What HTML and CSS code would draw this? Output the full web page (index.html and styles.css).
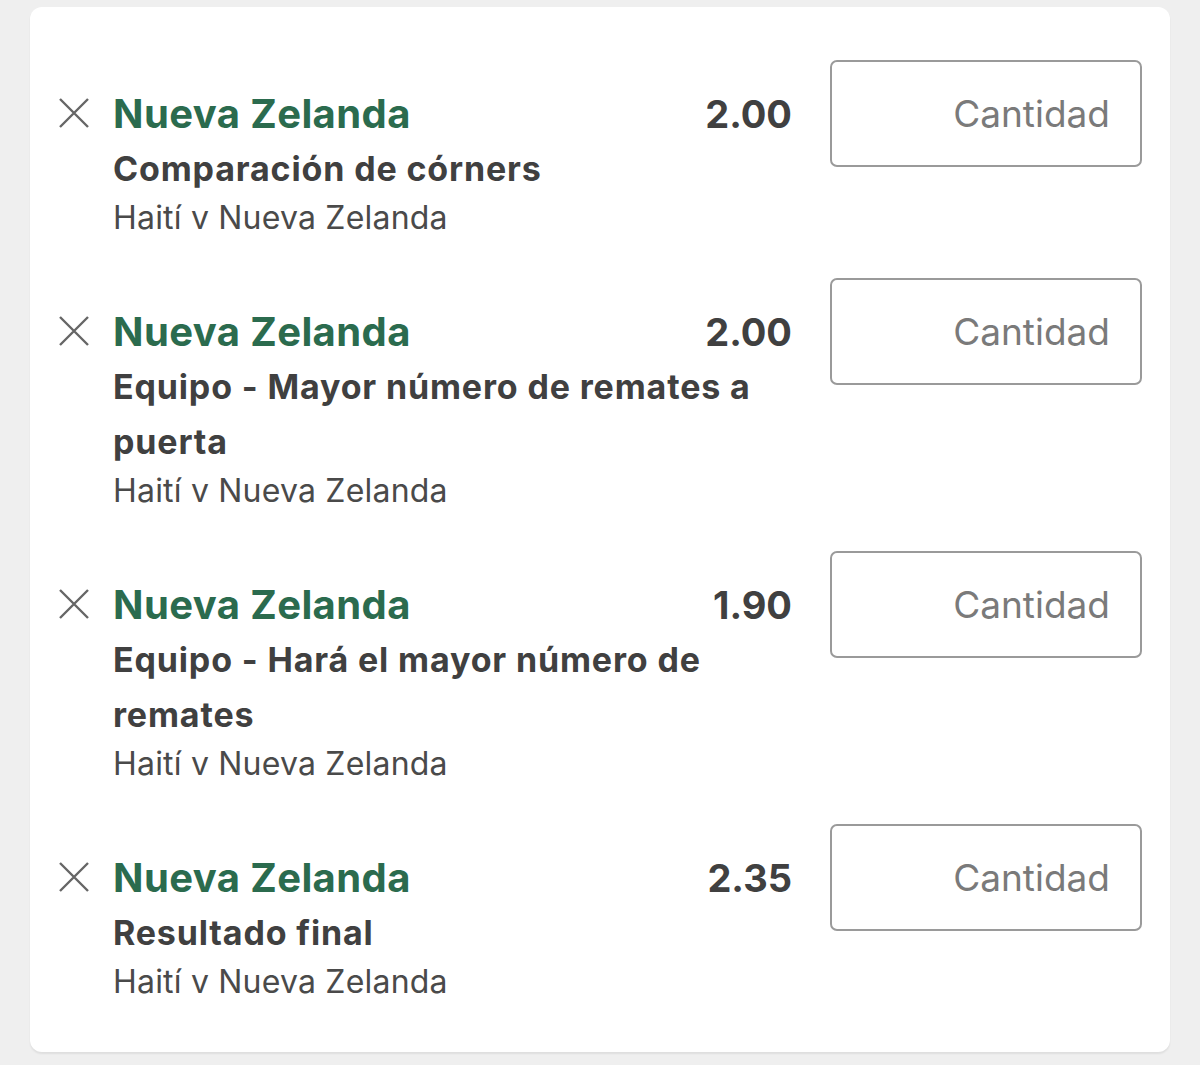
FILE: index.html
```html
<!DOCTYPE html>
<html lang="es">
<head>
<meta charset="utf-8">
<title>Boleto</title>
<link rel="stylesheet" href="styles.css">
</head>
<body>
<div class="card">
  <div class="bet">
    <button class="remove" aria-label="Quitar"><svg viewBox="0 0 32 32" width="32" height="32"><path d="M2 2 L30 30 M30 2 L2 30" stroke="#666" stroke-width="2.4" fill="none"/></svg></button>
    <div class="info">
      <div class="head"><span class="sel">Nueva Zelanda</span><span class="odds">2.00</span></div>
      <div class="market">Comparación de córners</div>
      <div class="event">Haití v Nueva Zelanda</div>
    </div>
    <input class="stake" type="text" placeholder="Cantidad">
  </div>
  <div class="bet">
    <button class="remove" aria-label="Quitar"><svg viewBox="0 0 32 32" width="32" height="32"><path d="M2 2 L30 30 M30 2 L2 30" stroke="#666" stroke-width="2.4" fill="none"/></svg></button>
    <div class="info">
      <div class="head"><span class="sel">Nueva Zelanda</span><span class="odds">2.00</span></div>
      <div class="market">Equipo - Mayor número de remates a puerta</div>
      <div class="event">Haití v Nueva Zelanda</div>
    </div>
    <input class="stake" type="text" placeholder="Cantidad">
  </div>
  <div class="bet">
    <button class="remove" aria-label="Quitar"><svg viewBox="0 0 32 32" width="32" height="32"><path d="M2 2 L30 30 M30 2 L2 30" stroke="#666" stroke-width="2.4" fill="none"/></svg></button>
    <div class="info">
      <div class="head"><span class="sel">Nueva Zelanda</span><span class="odds">1.90</span></div>
      <div class="market">Equipo - Hará el mayor número de remates</div>
      <div class="event">Haití v Nueva Zelanda</div>
    </div>
    <input class="stake" type="text" placeholder="Cantidad">
  </div>
  <div class="bet">
    <button class="remove" aria-label="Quitar"><svg viewBox="0 0 32 32" width="32" height="32"><path d="M2 2 L30 30 M30 2 L2 30" stroke="#666" stroke-width="2.4" fill="none"/></svg></button>
    <div class="info">
      <div class="head"><span class="sel">Nueva Zelanda</span><span class="odds">2.35</span></div>
      <div class="market">Resultado final</div>
      <div class="event">Haití v Nueva Zelanda</div>
    </div>
    <input class="stake" type="text" placeholder="Cantidad">
  </div>
</div>
</body>
</html>
```

FILE: styles.css
```css
* { box-sizing: border-box; }
html, body { margin: 0; padding: 0; }
body {
  background: #efefef;
  font-family: Inter, Roboto, "Liberation Sans", sans-serif;
  height: 1065px;
  padding-top: 7px;
}
.card {
  margin: 0 30px;
  width: 1140px;
  height: 1045px;
  background: #fff;
  border-radius: 12px;
  box-shadow: 0 2px 2px rgba(0,0,0,0.07);
  padding: 53px 28px 0 28px;
}
.bet {
  display: flex;
  align-items: flex-start;
  margin-bottom: 38px;
}
.remove {
  width: 55px;
  flex: 0 0 55px;
  padding: 0;
  margin: 37px 0 0 0;
  border: 0;
  background: none;
  display: flex;
  justify-content: flex-start;
}
.remove svg { display: block; }
.info {
  flex: 1 1 auto;
  padding-top: 27px;
  min-width: 0;
}
.head {
  display: flex;
  justify-content: space-between;
  align-items: baseline;
  line-height: 54px;
}
.sel {
  font-size: 40px;
  font-weight: 700;
  letter-spacing: 0.4px;
  color: #2b6b4e;
}
.odds {
  font-size: 38px;
  font-weight: 700;
  color: #404040;
  margin-right: -1px;
}
.market {
  font-size: 34px;
  font-weight: 700;
  letter-spacing: 0.85px;
  color: #404040;
  line-height: 55px;
}
.event {
  font-size: 32px;
  letter-spacing: 0.2px;
  color: #4a4a4a;
  line-height: 44px;
}
.stake {
  flex: 0 0 312px;
  width: 312px;
  height: 107px;
  margin-left: 39px;
  border: 2px solid #9a9a9a;
  border-radius: 7px;
  padding: 0 30px 0 10px;
  text-align: right;
  font-family: Inter, Roboto, "Liberation Sans", sans-serif;
  font-size: 37px;
  color: #333;
  background: #fff;
  outline: none;
}
.stake::placeholder { color: #7a7a7a; opacity: 1; }
```
